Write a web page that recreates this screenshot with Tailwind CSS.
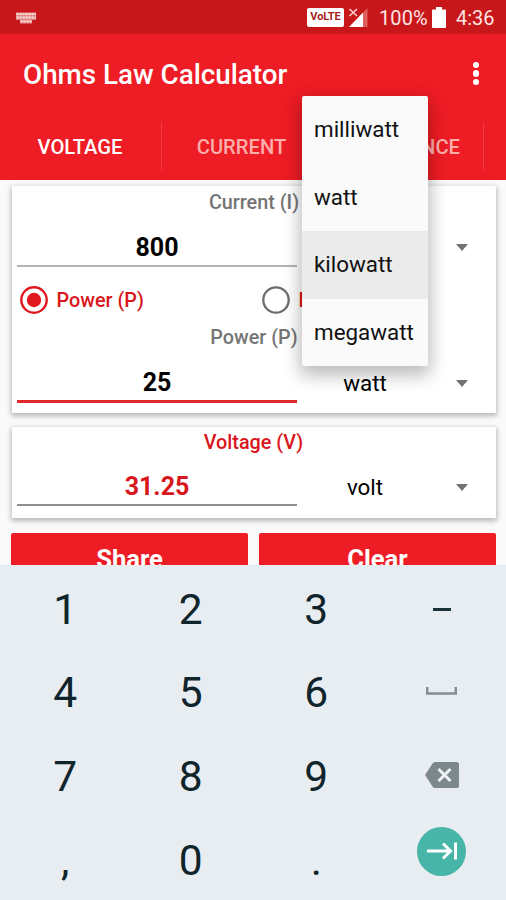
<!DOCTYPE html>
<html lang="en">
<head>
<meta charset="utf-8">
<title>Ohms Law Calculator</title>
<script src="https://cdn.jsdelivr.net/npm/@tailwindcss/browser@4"></script>
</head>
<body class="w-[506px] h-[900px] overflow-hidden">
<div class="relative flex flex-col w-[506px] h-[900px] overflow-hidden bg-[#fafafa] font-['Roboto',sans-serif] whitespace-nowrap">
  <!-- status bar -->
  <div class="h-[34px] shrink-0 bg-[#c8171b] flex items-center pl-4 pr-[11px] text-[#fde4e2]">
    <svg class="w-5 h-3 mt-px" viewBox="0 0 20 12" fill="none">
      <path d="M0 .5H20V8H16V11.500H4V8H0Z" fill="#e08a88"/>
      <path d="M.5 2H20M.5 5.500H20M4.500 9.500H15.500" stroke="#fbdcd9" stroke-width="1.800" stroke-dasharray="2.200 .8"/>
    </svg>
    <div class="ml-auto w-[37px] h-[19px] rounded-[2px] bg-white text-[#a81c1c] flex items-center justify-center text-[11px] font-bold tracking-[-0.1px]">VoLTE</div>
    <svg class="ml-[4px] w-[22px] h-[21px]" viewBox="0 0 22 21">
      <path d="M19.500 1V20H15V5.500Z" fill="#e0605f"/><path d="M15 5.500V20H1Z" fill="#fff"/><path d="M1.500 2L9 9M9 2L1.500 9" stroke="#fbd0cd" stroke-width="1.600"/>
    </svg>
    <div class="ml-[9px] w-[48px] text-[20px] leading-none tracking-[0.1px] pt-[2px]">100%</div>
    <svg class="ml-[5px] w-[14px] h-[21px]" viewBox="0 0 14 21"><path d="M4 0h6v2.500h3a1 1 0 0 1 1 1V20a1 1 0 0 1-1 1H1a1 1 0 0 1-1-1V3.500a1 1 0 0 1 1-1h3z" fill="#fff"/></svg>
    <div class="ml-[10px] w-[39px] text-[20px] leading-none pt-[2px]">4:36</div>
  </div>
  <!-- app bar -->
  <div class="h-[81px] shrink-0 bg-[#ee1c24] flex items-center justify-between pl-[23px] pr-[27px] text-white">
    <div class="text-[27.800px] font-medium leading-none">Ohms Law Calculator</div>
    <div class="flex flex-col gap-[2px] -mt-[2px]">
      <span class="size-[6.500px] rounded-full bg-white"></span><span class="size-[6.500px] rounded-full bg-white"></span><span class="size-[6.500px] rounded-full bg-white"></span>
    </div>
  </div>
  <!-- tabs -->
  <div class="h-[65px] shrink-0 bg-[#ee1c24] flex text-[20.200px] font-medium text-[#fbaeab]">
    <div class="w-[162px] flex items-center justify-center text-white border-r border-[#f23d40] h-12 my-2 pt-px pr-px">VOLTAGE</div>
    <div class="w-[161px] flex items-center justify-center border-r border-[#f23d40] h-12 my-2 pt-px pr-px">CURRENT</div>
    <div class="w-[161px] flex items-center justify-end pr-[23px] border-r border-[#f23d40] h-12 my-2 pt-px">RESISTANCE</div>
  </div>
  <!-- input card -->
  <div class="mt-[6px] ml-3 w-[484px] h-[227px] shrink-0 bg-white shadow-[0_2px_5px_1px_rgba(0,0,0,0.27)] flex flex-col text-black">
    <div class="h-8 flex items-center justify-center text-[19.800px] font-medium text-[#757575] pt-px">Current (I)</div>
    <div class="h-[58px] flex pl-[5px]">
      <div class="w-[280px] h-[49px] border-b-2 border-[#b4b4b4] flex items-center justify-center text-[25px] font-bold pt-[11px] leading-none">800</div>
      <div class="w-[136px] ml-0.5 flex items-center justify-center text-[22px]"></div>
      <svg class="ml-[21px] w-3 h-[7px] self-center" viewBox="0 0 12 7"><path d="M0 0H12L6 7Z" fill="#727272"/></svg>
    </div>
    <div class="h-[49px] flex items-center pl-2 text-[19.800px] font-medium text-[#d9161c]">
      <svg class="size-7 -mt-px" viewBox="0 0 28 28"><circle cx="14" cy="14" r="12.700" fill="none" stroke="#e0181e" stroke-width="2.400"/><circle cx="14" cy="14" r="7.200" fill="#e0181e"/></svg>
      <span class="ml-[8.500px] w-[205.500px] pt-px">Power (P)</span>
      <svg class="size-7 -mt-px" viewBox="0 0 28 28"><circle cx="14" cy="14" r="12.700" fill="none" stroke="#6c6c6c" stroke-width="2.300"/></svg>
      <span class="ml-[8.500px] pt-px">Resistance (R)</span>
    </div>
    <div class="h-[25px] flex items-center justify-center text-[19.800px] font-medium text-[#757575] pt-px">Power (P)</div>
    <div class="h-[63px] flex pl-[5px]">
      <div class="w-[280px] h-[53px] border-b-[3px] border-[#e0272b] flex items-center justify-center text-[25px] font-bold pt-[15px] leading-none">25</div>
      <div class="w-[136px] h-[67px] flex items-center justify-center text-[22.400px]">watt</div>
      <svg class="ml-[23px] mt-[30px] w-3 h-[7px]" viewBox="0 0 12 7"><path d="M0 0H12L6 7Z" fill="#727272"/></svg>
    </div>
  </div>
  <!-- result card -->
  <div class="mt-[14px] ml-3 w-[484px] h-[91px] shrink-0 bg-white shadow-[0_2px_5px_1px_rgba(0,0,0,0.27)] flex flex-col text-[#d9161c]">
    <div class="h-[30px] flex items-center justify-center text-[19.800px] font-medium pr-px pt-px">Voltage (V)</div>
    <div class="flex pl-[5px] h-[61px]">
      <div class="w-[280px] h-[49px] border-b-2 border-[#8f8f8f] flex items-center justify-center text-[25px] font-bold pt-[12px] leading-none">31.25</div>
      <div class="w-[136px] h-[61px] flex items-center justify-center text-[22.400px] text-black pt-px">volt</div>
      <svg class="ml-[23px] mt-[27px] w-3 h-[7px]" viewBox="0 0 12 7"><path d="M0 0H12L6 7Z" fill="#727272"/></svg>
    </div>
  </div>
  <!-- actions, partly covered by the keyboard -->
  <div class="mt-[15px] h-[32px] shrink-0 overflow-hidden pl-[11px] flex gap-[11px] text-white text-[25.600px] font-bold">
    <div class="w-[237px] h-[53px] rounded-[2px] bg-[#ee1c24] flex items-center justify-center">Share</div>
    <div class="w-[237px] h-[53px] rounded-[2px] bg-[#ee1c24] flex items-center justify-center">Clear</div>
  </div>
  <!-- numeric keyboard -->
  <div class="h-[335px] shrink-0 bg-[#e8edf1] grid grid-cols-[repeat(4,125.500px)] auto-rows-[83.700px] pt-[3px] pl-[2.500px] place-items-center text-[42.500px] leading-none text-[#10242c]">
    <span>1</span><span>2</span><span>3</span>
    <svg class="w-[18px] h-[3px]" viewBox="0 0 18 3"><path d="M0 0H18V3H0Z" fill="#1b323b"/></svg>
    <span>4</span><span>5</span><span>6</span>
    <svg class="w-[31px] h-[8px] -mt-[5px]" viewBox="0 0 31 8"><path d="M1.200 0V6.500H29.800V0" fill="none" stroke="#858d91" stroke-width="2.400"/></svg>
    <span>7</span><span>8</span><span>9</span>
    <svg class="w-[34px] h-[26px] -mt-[5px]" viewBox="0 0 34 26"><path d="M10 0H31.500A2.500 2.500 0 0 1 34 2.500V23.500A2.500 2.500 0 0 1 31.500 26H10Q8.500 26 7.500 24.500L0 13L7.500 1.500Q8.500 0 10 0Z" fill="#7d888d"/><path d="M13.500 7L25.500 19M25.500 7L13.500 19" stroke="#eef2f4" stroke-width="3"/></svg>
    <span>,</span><span>0</span><span>.</span>
    <div class="size-[49px] rounded-full bg-[#48b5a9] -mt-[19px] flex items-center justify-center">
      <svg class="w-[30px] h-[18px]" viewBox="0 0 30 18" fill="none" stroke="#fff" stroke-width="3"><path d="M0 9H23M16 1.500L23.500 9L16 16.500M28.500 .5V17.500"/></svg>
    </div>
  </div>
  <!-- unit menu -->
  <div class="absolute left-[302px] top-[96px] w-[126px] h-[270px] rounded-[2px] overflow-hidden bg-[#fafafa] text-[#111] text-[22.400px] flex flex-col shadow-[0_7px_18px_2px_rgba(0,0,0,0.28)]">
    <div class="flex-1 flex items-center pl-3 pt-px">milliwatt</div>
    <div class="flex-1 flex items-center pl-3 pt-px">watt</div>
    <div class="flex-1 flex items-center pl-3 pt-px bg-[#ebebeb]">kilowatt</div>
    <div class="flex-1 flex items-center pl-3 pt-px">megawatt</div>
  </div>
</div>
</body>
</html>
